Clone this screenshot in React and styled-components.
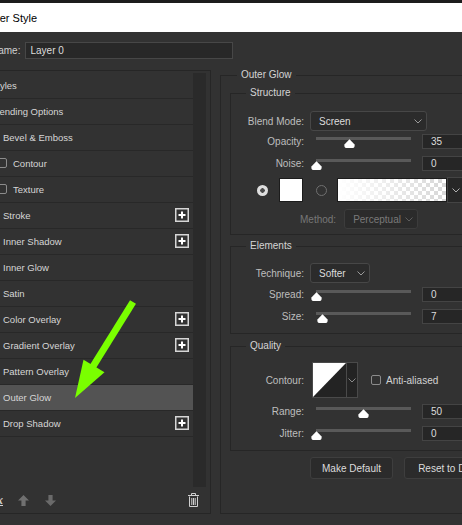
import React from 'react';
import styled, { createGlobalStyle } from 'styled-components';

const GlobalStyle = createGlobalStyle`
  html, body {
    margin: 0;
    padding: 0;
    background: #323232;
  }
  body {
    font-family: "Liberation Sans", Arial, sans-serif;
    overflow: hidden;
  }
  * {
    box-sizing: border-box;
  }
`;

const Stage = styled.div`
  position: relative;
  width: 462px;
  height: 525px;
  overflow: hidden;
  background: #323232;
`;

const Window = styled.div`
  margin-left: -30px;
  width: 620px;
`;

const TopEdge = styled.div`
  height: 3px;
  background: #1c1c1c;
`;

const TitleBar = styled.div`
  height: 29px;
  background: #ffffff;
  display: flex;
  align-items: center;
  padding-left: 12px;
  font-size: 11px;
  color: #000;
`;

const Body = styled.div`
  padding-top: 10px;
`;

const NameRow = styled.div`
  display: flex;
  align-items: center;
  height: 17px;
  padding-left: 21px;
  gap: 5px;
  font-size: 10px;
  color: #d0d0d0;
`;

const NameInput = styled.div`
  width: 208px;
  height: 17px;
  border: 1px solid #474747;
  background: #282828;
  color: #dcdcdc;
  padding-left: 4px;
  display: flex;
  align-items: center;
`;

const Main = styled.div`
  display: flex;
  margin-top: 11px;
  padding-left: 10px;
  gap: 9px;
  height: 444px;
`;

/* ---------- left: styles list ---------- */

const StylesPanel = styled.div`
  width: 231px;
  border: 1px solid #262626;
  padding-top: 2px;
  display: flex;
  flex-direction: column;
`;

const ListArea = styled.div`
  display: flex;
  height: 414px;
`;

const List = styled.div`
  width: 212px;
`;

const Track = styled.div`
  width: 13px;
  margin-right: 4px;
  background: #2a2a2a;
`;

const INDENT = { head: 10, fx: 6, sub: 16 };

const ListRow = styled.div`
  height: 26px;
  border-bottom: 1px solid #282828;
  background: ${(p) => (p.$selected ? '#535353' : 'transparent')};
  display: flex;
  align-items: center;
  gap: 6px;
  padding-left: ${(p) => INDENT[p.$kind]}px;
  padding-right: 4px;
  padding-bottom: 1px;
  font-size: 9.5px;
  color: #d6d6d6;
`;

const RowLabel = styled.span`
  flex: 1;
  white-space: nowrap;
`;

const Check = styled.span`
  width: 10px;
  height: 10px;
  flex: none;
  border: 1px solid #8c8c8c;
  border-radius: 2px;
  margin-left: ${(p) => p.$ml || 0}px;
`;

const PanelFooter = styled.div`
  height: 26px;
  display: flex;
  align-items: center;
`;

const Fx = styled.span`
  width: 12px;
  margin-left: 12px;
  font-family: "Liberation Serif", serif;
  font-style: italic;
  font-weight: bold;
  font-size: 12px;
  color: #cfcfcf;
  text-decoration: underline;
`;

const FooterIcon = styled.svg`
  flex: none;
  margin-left: ${(p) => p.$ml || 0}px;
  margin-right: ${(p) => p.$mr || 0}px;
`;

const Spacer = styled.div`
  flex: 1;
`;

/* ---------- right: settings ---------- */

const Settings = styled.div`
  width: 320px;
`;

const Group = styled.fieldset`
  margin: ${(p) => p.$mt || 0}px 0 0 0;
  min-width: 0;
  border: 1px solid #262626;
  padding: ${(p) => p.$pad};
  height: ${(p) => (p.$h ? `${p.$h}px` : 'auto')};
`;

const Legend = styled.legend`
  font-size: 10px;
  line-height: 10px;
  padding: 0 4px;
  margin-left: ${(p) => p.$ml}px;
  color: #d4d4d4;
`;

const FormRow = styled.div`
  display: grid;
  grid-template-columns: ${(p) => p.$cols || '73px auto'};
  column-gap: 6px;
  align-items: center;
  height: ${(p) => p.$h}px;
  margin-top: ${(p) => p.$mt || 0}px;
`;

const Label = styled.span`
  text-align: right;
  font-size: 10px;
  color: #bebebe;
  white-space: nowrap;
`;

const Select = styled.div`
  width: ${(p) => p.$w}px;
  height: 20px;
  display: flex;
  align-items: center;
  justify-content: space-between;
  padding: 0 4px 0 8px;
  border: 1px solid ${(p) => (p.$disabled ? '#3c3c3c' : '#474747')};
  border-radius: 3px;
  background: #2b2b2b;
  font-size: 10px;
  color: ${(p) => (p.$disabled ? '#7a7a7a' : '#dcdcdc')};
`;

const SliderCell = styled.div`
  position: relative;
  height: 100%;
`;

const SliderTrack = styled.div`
  margin: 6px 0 0 6px;
  width: 95px;
  height: 3px;
  background: #595959;
`;

const Thumb = styled.svg`
  position: absolute;
  top: 8px;
  left: ${(p) => 6 + p.$pct * 0.95 - 5.5}px;
`;

const NumInput = styled.div`
  width: 60px;
  height: 15px;
  border: 1px solid #444;
  background: #262626;
  display: flex;
  align-items: center;
  padding-left: 8px;
  font-size: 10px;
  color: #dcdcdc;
`;

const ColorRow = styled.div`
  display: flex;
  align-items: center;
  height: 24px;
  margin-top: 4px;
  padding-left: 26px;
`;

const Radio = styled.span`
  width: 11px;
  height: 11px;
  flex: none;
  border-radius: 50%;
  margin-left: ${(p) => p.$ml || 0}px;
  ${(p) =>
    p.$on
      ? 'background: radial-gradient(circle, #4a4a4a 0 2px, #dedede 2.5px);'
      : 'border: 1px solid #707070;'}
`;

const Swatch = styled.div`
  width: 24px;
  height: 24px;
  margin-left: 11px;
  background: #fff;
  border: 1px solid #1c1c1c;
`;

const GradientBox = styled.div`
  width: 110px;
  height: 24px;
  margin-left: 10px;
  border: 1px solid #1c1c1c;
  background: linear-gradient(to right, #ffffff 0%, rgba(255, 255, 255, 0) 100%),
    conic-gradient(#d7d7d7 25%, #ffffff 0 50%, #d7d7d7 0 75%, #ffffff 0) 0 0 / 8px 8px;
`;

const GradientDrop = styled.div`
  width: 20px;
  height: 26px;
  border: 1px solid #444;
  background: #272727;
  display: flex;
  align-items: center;
  padding-left: 4px;
`;

const MethodRow = styled.div`
  display: flex;
  align-items: center;
  gap: 8px;
  height: 20px;
  margin-top: 7px;
  padding-left: 69px;
  font-size: 10px;
  color: #777;
`;

const ControlCell = styled.div`
  display: flex;
  align-items: center;
`;

const ContourBox = styled.div`
  display: flex;
  width: 46px;
  height: 36px;
  margin-left: 2px;
  border: 1px solid #4a4a4a;
  background: #232323;
`;

const ContourDrop = styled.div`
  flex: 1;
  border-left: 1px solid #4a4a4a;
  display: flex;
  align-items: center;
  justify-content: center;
`;

const CheckText = styled.span`
  margin-left: 5px;
  font-size: 10px;
  color: #d2d2d2;
`;

const ButtonRow = styled.div`
  display: flex;
  gap: 11px;
  margin-top: 6px;
  padding-left: 80px;
`;

const Button = styled.div`
  width: ${(p) => p.$w}px;
  height: 22px;
  flex: none;
  border: 1px solid #3e3e3e;
  border-radius: 3px;
  background: #2b2b2b;
  display: flex;
  align-items: center;
  justify-content: center;
  font-size: 10px;
  color: #dcdcdc;
  white-space: nowrap;
`;

const Pointer = styled.svg`
  position: absolute;
  left: 60px;
  top: 290px;
`;

/* ---------- small drawings ---------- */

const Chevron = ({ color = '#9a9a9a' }) => (
  <svg width="8" height="5" viewBox="0 0 8 5">
    <polyline points="0.5,0.5 4,4 7.5,0.5" fill="none" stroke={color} strokeWidth="1" />
  </svg>
);

const PlusBox = () => (
  <svg width="14" height="14" viewBox="0 0 14 14">
    <rect x="0.75" y="0.75" width="12.5" height="12.5" fill="none" stroke="#d6d6d6" strokeWidth="1.5" />
    <path d="M3.5 7h7M7 3.5v7" stroke="#ffffff" strokeWidth="2" />
  </svg>
);

const Slider = ({ pct }) => (
  <SliderCell>
    <SliderTrack />
    <Thumb $pct={pct} width="11" height="9" viewBox="0 0 11 9">
      <path d="M5.5 0.3 L10.6 5.6 Q11 9 8.8 9 L2.2 9 Q0 9 0.4 5.6 Z" fill="#ffffff" />
    </Thumb>
  </SliderCell>
);

const SliderRow = ({ label, pct, value, mt }) => (
  <FormRow $cols="73px 106px 60px" $h={21} $mt={mt}>
    <Label>{label}</Label>
    <Slider pct={pct} />
    <NumInput>{value}</NumInput>
  </FormRow>
);

const layers = [
  { label: 'Styles', kind: 'head' },
  { label: 'Blending Options', kind: 'head' },
  { label: 'Bevel & Emboss', kind: 'fx' },
  { label: 'Contour', kind: 'sub' },
  { label: 'Texture', kind: 'sub' },
  { label: 'Stroke', kind: 'fx', plus: true },
  { label: 'Inner Shadow', kind: 'fx', plus: true },
  { label: 'Inner Glow', kind: 'fx' },
  { label: 'Satin', kind: 'fx' },
  { label: 'Color Overlay', kind: 'fx', plus: true },
  { label: 'Gradient Overlay', kind: 'fx', plus: true },
  { label: 'Pattern Overlay', kind: 'fx' },
  { label: 'Outer Glow', kind: 'fx', selected: true },
  { label: 'Drop Shadow', kind: 'fx', plus: true },
];

export default function App() {
  return (
    <Stage>
      <GlobalStyle />
      <Window>
        <TopEdge />
        <TitleBar>Layer Style</TitleBar>
        <Body>
          <NameRow>
            <span>Name:</span>
            <NameInput>Layer 0</NameInput>
          </NameRow>

          <Main>
            <StylesPanel>
              <ListArea>
                <List>
                  {layers.map((l) => (
                    <ListRow key={l.label} $kind={l.kind} $selected={l.selected}>
                      {l.kind !== 'head' && <Check />}
                      <RowLabel>{l.label}</RowLabel>
                      {l.plus && <PlusBox />}
                    </ListRow>
                  ))}
                </List>
                <Track />
              </ListArea>
              <PanelFooter>
                <Fx>fx</Fx>
                <FooterIcon $ml={13} width="11" height="11" viewBox="0 0 11 11">
                  <path d="M5.5 0 L11 5.5 L7.6 5.5 L7.6 11 L3.4 11 L3.4 5.5 L0 5.5 Z" fill="#707070" />
                </FooterIcon>
                <FooterIcon $ml={16} width="11" height="11" viewBox="0 0 11 11">
                  <path d="M5.5 11 L11 5.5 L7.6 5.5 L7.6 0 L3.4 0 L3.4 5.5 L0 5.5 Z" fill="#6a6a6a" />
                </FooterIcon>
                <Spacer />
                <FooterIcon $mr={11} width="11" height="14" viewBox="0 0 11 14">
                  <g fill="none" stroke="#d0d0d0" strokeWidth="1">
                    <path d="M3.5 2.5V0.5h4v2" />
                    <path d="M0 2.5h11" />
                    <path d="M1.5 3.5v10h8v-10" />
                    <path d="M3.8 5v7M5.5 5v7M7.2 5v7" />
                  </g>
                </FooterIcon>
              </PanelFooter>
            </StylesPanel>

            <Settings>
              <Group $pad="8px 0 0 9px" $h={444}>
                <Legend $ml={7}>Outer Glow</Legend>

                <Group $pad="13px 0 5px 0">
                  <Legend $ml={15}>Structure</Legend>
                  <FormRow $h={20}>
                    <Label>Blend Mode:</Label>
                    <Select $w={117}>
                      Screen
                      <Chevron />
                    </Select>
                  </FormRow>
                  <SliderRow label="Opacity:" pct={35} value="35" />
                  <SliderRow label="Noise:" pct={0} value="0" mt={1} />
                  <ColorRow>
                    <Radio $on />
                    <Swatch />
                    <Radio $ml={13} />
                    <GradientBox />
                    <GradientDrop>
                      <Chevron color="#b0b0b0" />
                    </GradientDrop>
                  </ColorRow>
                  <MethodRow>
                    <span>Method:</span>
                    <Select $w={74} $disabled>
                      Perceptual
                      <Chevron color="#5e5e5e" />
                    </Select>
                  </MethodRow>
                </Group>

                <Group $pad="12px 0 6px 0" $mt={6}>
                  <Legend $ml={15}>Elements</Legend>
                  <FormRow $h={20}>
                    <Label>Technique:</Label>
                    <Select $w={60}>
                      Softer
                      <Chevron />
                    </Select>
                  </FormRow>
                  <SliderRow label="Spread:" pct={0} value="0" mt={1} />
                  <SliderRow label="Size:" pct={6.5} value="7" mt={1} />
                </Group>

                <Group $pad="11px 0 6px 0" $mt={7}>
                  <Legend $ml={15}>Quality</Legend>
                  <FormRow $h={36}>
                    <Label>Contour:</Label>
                    <ControlCell>
                      <ContourBox>
                        <svg width="33" height="34" viewBox="0 0 33 34">
                          <polygon points="0,0 33,0 0,34" fill="#ffffff" />
                        </svg>
                        <ContourDrop>
                          <Chevron color="#8a8a8a" />
                        </ContourDrop>
                      </ContourBox>
                      <Check $ml={13} />
                      <CheckText>Anti-aliased</CheckText>
                    </ControlCell>
                  </FormRow>
                  <SliderRow label="Range:" pct={50} value="50" mt={3} />
                  <SliderRow label="Jitter:" pct={0} value="0" mt={1} />
                </Group>

                <ButtonRow>
                  <Button $w={83}>Make Default</Button>
                  <Button $w={100}>Reset to Default</Button>
                </ButtonRow>
              </Group>
            </Settings>
          </Main>
        </Body>
      </Window>

      <Pointer width="90" height="120" viewBox="0 0 90 120">
        <line x1="73" y1="12" x2="32" y2="78" stroke="#7aff00" strokeWidth="7" />
        <polygon points="23.5,69.8 44.5,82.2 15,108" fill="#7aff00" />
      </Pointer>
    </Stage>
  );
}
